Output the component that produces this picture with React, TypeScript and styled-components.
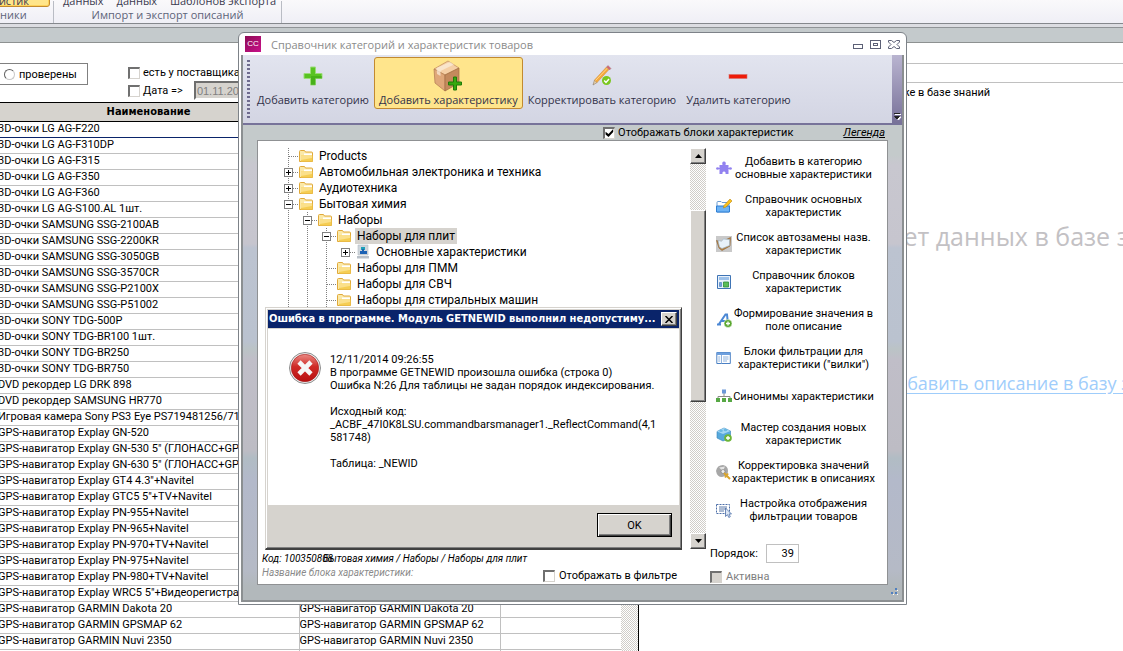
import React from 'react';
import styled, { createGlobalStyle, css } from 'styled-components';

const UI = `Roboto, "Liberation Sans", sans-serif`;
const SEGOE = `"Open Sans", "Noto Sans", sans-serif`;
const BOLD = `"DejaVu Sans Condensed", "DejaVu Sans", sans-serif`;
const FACE = '#d6d3ce';

const Global = createGlobalStyle`
  * { box-sizing: border-box; }
  body { margin: 0; background: #fff; font: 11px/13px ${UI}; color: #000; }
  button, input { font: inherit; color: inherit; margin: 0; }
  svg { display: block; flex: none; }
`;

const Desktop = styled.div`
  position: relative;
  height: 100vh;
  overflow: hidden;
  display: flex;
  flex-direction: column;
`;

/* ---------- ribbon ---------- */
const Ribbon = styled.header`
  flex: none;
  height: 24px;
  display: flex;
  align-items: flex-end;
  background: linear-gradient(#faf9fb, #efeff6);
  border-bottom: 1px solid #85888d;
  font-family: ${SEGOE};
`;
const RibbonGroup = styled.section<{ $w: number }>`
  flex: none;
  width: ${(p) => p.$w}px;
  height: 22px;
  display: flex;
  flex-direction: column;
  justify-content: flex-end;
  align-items: center;
  border-right: 1px solid #b9bcc4;
  white-space: nowrap;
`;
const RibbonCommands = styled.div`
  flex: none;
  display: flex;
  gap: 11px;
  align-self: flex-start;
  padding-left: 8px;
`;
const RibbonButton = styled.button<{ $active?: boolean }>`
  flex: none;
  height: 24px;
  padding: 0 0 1px;
  border: 1px solid transparent;
  background: none;
  display: flex;
  align-items: flex-end;
  line-height: 8px;
  color: #3b3b4f;
  ${(p) =>
    p.$active &&
    css`
      width: 80px;
      margin-left: -38px;
      justify-content: flex-end;
      padding-right: 20px;
      border-color: #c28a30;
      border-radius: 3px;
      background: #ffe58a;
      box-shadow: inset 0 0 0 1px #ffd35a;
    `}
`;
const RibbonCaption = styled.div<{ $start?: boolean }>`
  line-height: 16px;
  color: #5d6379;
  ${(p) => p.$start && css`align-self: flex-start;`}
`;
const Band = styled.div`
  flex: none;
  height: 19px;
  border-top: 3px solid #dcdde2;
  border-bottom: 1px solid #8d9191;
  background: linear-gradient(#8f9396 1px, #c4cacc 1px);
`;

/* ---------- background workspace ---------- */
const Workspace = styled.main`
  flex: 1;
  display: flex;
  min-height: 0;
`;
const ListPane = styled.section`
  flex: none;
  width: 639px;
  display: flex;
  flex-direction: column;
  border-right: 1px solid #000;
`;
const Filters = styled.div`
  flex: none;
  height: 59px;
  display: flex;
  padding-top: 20px;
`;
const RadioBox = styled.div`
  width: 88px;
  height: 22px;
  border: 1px solid #808080;
  border-left: 0;
  display: flex;
  align-items: center;
  padding-left: 4px;
`;
const CheckLabel = styled.label<{ $off?: boolean; $gap?: number }>`
  display: flex;
  align-items: center;
  gap: ${(p) => p.$gap ?? 3}px;
  white-space: nowrap;
  color: ${(p) => (p.$off ? '#808080' : '#000')};
`;
const Radio = styled.input`
  appearance: none;
  width: 11px;
  height: 11px;
  border-radius: 50%;
  border: 1px solid #606060;
  border-right-color: #c8c8c8;
  border-bottom-color: #c8c8c8;
  background: #fff;
`;
const Tick = styled.input`
  appearance: none;
  flex: none;
  width: 12px;
  height: 12px;
  border: 1px solid #707070;
  border-top-width: 2px;
  border-left-width: 2px;
  border-right-color: ${FACE};
  border-bottom-color: ${FACE};
  background: #fff;
  &:disabled { background: ${FACE}; }
  &:checked::after {
    content: '';
    display: block;
    width: 9px;
    height: 9px;
    background: #000;
    clip-path: polygon(5% 35%, 38% 62%, 90% 5%, 90% 38%, 38% 95%, 5% 66%);
  }
`;
const FilterColumn = styled.div`
  display: flex;
  flex-direction: column;
  padding: 3px 0 0 40px;
`;
const DateRow = styled.div`
  display: flex;
  align-items: center;
  gap: 11px;
  margin-top: 2px;
`;
const DateField = styled.input`
  width: 90px;
  height: 19px;
  padding: 0 1px;
  border: 2px solid #6e6e6e;
  border-right-color: #fff;
  border-bottom-color: #fff;
  background: ${FACE};
  color: #808080;
  font-family: "Liberation Sans", sans-serif;
`;
const TableWrap = styled.div`
  flex: 1;
  min-height: 0;
  display: flex;
  border-top: 1px solid #000;
  overflow: hidden;
`;
const Table = styled.table`
  flex: 1;
  align-self: flex-start;
  margin-left: -2px;
  border-collapse: collapse;
  table-layout: fixed;
  white-space: nowrap;
`;
const Th = styled.th`
  height: 18px;
  padding: 0;
  background: ${FACE};
  border-bottom: 1px solid #000;
  font: bold 11px/16px ${BOLD};
`;
const Td = styled.td<{ $current?: boolean; $last?: boolean }>`
  height: 16px;
  padding: 0;
  line-height: 13px;
  vertical-align: top;
  overflow: hidden;
  border-bottom: 1px solid ${(p) => (p.$current ? '#0a246a' : '#c0c0c0')};
  border-right: ${(p) => (p.$last ? '0' : '1px solid #c0c0c0')};
`;
const dither = css`
  background: repeating-conic-gradient(#fff 0 25%, #d0cdc8 0 50%) 0 0 / 2px 2px;
`;
const ListScroll = styled.div`
  width: 17px;
  ${dither}
`;

const DetailPane = styled.section`
  flex: 1;
  min-width: 0;
  overflow: hidden;
  white-space: nowrap;
`;
const DetailLine = styled.div<{ $h: number }>`
  height: ${(p) => p.$h}px;
  border-bottom: 1px solid #c0c0c0;
`;
const DetailNote = styled.p`
  margin: 3px 0 0;
  padding-left: 245px;
`;
const NoData = styled.h2`
  margin: 121px 0 0;
  padding-left: 246px;
  font: 25px/32px ${SEGOE};
  color: #c3c1c4;
`;
const AddLink = styled.a`
  display: inline-block;
  margin: 119px 0 0 245px;
  font: 18px/24px ${SEGOE};
  color: #9fcdfb;
  text-underline-offset: 3px;
`;

/* ---------- catalogue window ---------- */
const Window = styled.section`
  position: absolute;
  left: 238px;
  top: 32px;
  width: 669px;
  height: 573px;
  display: flex;
  flex-direction: column;
  padding: 0 2px 2px;
  border: 1px solid #7d8288;
  border-radius: 6px 6px 0 0;
  background: #fff;
`;
const TitleBar = styled.header`
  flex: none;
  height: 22px;
  display: flex;
  align-items: center;
  padding: 0 4px;
  gap: 10px;
  font-family: ${SEGOE};
  color: #8b8b8b;
`;
const Logo = styled.span`
  width: 16px;
  height: 16px;
  background: linear-gradient(135deg, #8d0c55, #c9128a);
  color: #fff;
  font: 8px/15px "Liberation Sans", sans-serif;
  text-align: center;
`;
const WindowTitle = styled.h1`
  flex: 1;
  margin: 0;
  font: inherit;
`;
const WindowButton = styled.button`
  padding: 0;
  width: 12px;
  height: 12px;
  border: 0;
  background: none;
  margin-left: -4px;
`;
const WindowBody = styled.div`
  flex: 1;
  min-height: 0;
  display: flex;
  flex-direction: column;
  border: 2px solid #8b8f91;
  border-top: 0;
  background: linear-gradient(
    #c4cacb 0 100px, #c8c7cf 110px, #c6c5ce 189px, #bcc3d0 193px, #bac2cf 286px,
    #bbc3c6 294px, #c0bec8 304px, #bdbcc4 395px, #b1bcc4 403px, #b3b9ca 425px, #b5bac6 515px, #b2b8bb 532px
  );
`;
const Toolbar = styled.nav`
  flex: none;
  height: 70px;
  display: flex;
  border-bottom: 2px solid #77739a;
  background: linear-gradient(#e2e4ef, #d3d5e3);
  font-family: ${SEGOE};
`;
const Grip = styled.span`
  width: 3px;
  height: 59px;
  margin: 5px 2px 0 4px;
  background: repeating-linear-gradient(#6f6c8f 0 2px, transparent 2px 4px);
`;
const ToolButton = styled.button<{ $active?: boolean }>`
  height: 52px;
  margin-top: 2px;
  padding: 0 4px;
  display: flex;
  flex-direction: column;
  align-items: center;
  border: 1px solid ${(p) => (p.$active ? '#c28a30' : 'transparent')};
  border-radius: 3px;
  background: ${(p) => (p.$active ? '#ffe58c' : 'none')};
  line-height: 14px;
  color: #33334a;
  white-space: nowrap;
`;
const ToolIcon = styled.span`
  height: 35px;
  display: flex;
  align-items: center;
`;
const ToolOverflow = styled.button`
  width: 10px;
  padding: 0;
  margin-left: auto;
  border: 0;
  background: linear-gradient(#b9b4d0, #787299);
  display: flex;
  align-items: flex-end;
  justify-content: center;
`;
const Options = styled.div`
  flex: none;
  height: 15px;
  display: flex;
  align-items: center;
  justify-content: flex-end;
  gap: 50px;
  padding-right: 17px;
`;
const Legend = styled.a`
  color: #000;
  font-style: italic;
`;
const Panel = styled.div`
  flex: 1;
  min-height: 0;
  margin: 0 14px 15px;
  display: flex;
  border: 1px solid #8f9193;
  background: #fff;
`;
const TreeSide = styled.div`
  flex: 1;
  display: flex;
  flex-direction: column;
  padding-top: 7px;
`;
const Tree = styled.ul`
  flex: 1;
  margin: 0;
  padding: 0 0 0 21px;
  list-style: none;
  font-size: 12px;
`;
const Node = styled.li`
  height: 16px;
  display: flex;
  align-items: center;
  white-space: nowrap;
`;
const vdots = 'repeating-linear-gradient(#808080 0 1px, transparent 1px 2px) 9px 0 / 1px 100% no-repeat';
const hdots = 'repeating-linear-gradient(90deg, #808080 0 1px, transparent 1px 2px) 10px 8px / 9px 1px no-repeat';
const Guide = styled.span<{ $v?: boolean; $h?: boolean }>`
  flex: none;
  width: 19px;
  height: 16px;
  padding: 4px 0 0 5px;
  background: ${(p) => [p.$v && vdots, p.$h && hdots].filter(Boolean).join(', ') || 'none'};
`;
const Expander = styled.button<{ $open?: boolean }>`
  display: block;
  width: 9px;
  height: 9px;
  padding: 0;
  border: 1px solid #808080;
  background:
    linear-gradient(#000, #000) 1px 3px / 5px 1px no-repeat,
    ${(p) => (p.$open ? '' : 'linear-gradient(#000, #000) 3px 1px / 1px 5px no-repeat,')}
    #fff;
`;
const NodeLabel = styled.span<{ $selected?: boolean }>`
  height: 16px;
  line-height: 17px;
  margin-left: 3px;
  padding: 0 2px;
  background: ${(p) => (p.$selected ? FACE : 'none')};
`;
const Footnotes = styled.footer`
  flex: none;
  height: 36px;
  display: flex;
  justify-content: space-between;
  padding: 4px 13px 0 4px;
  white-space: nowrap;
  font-size: 10px;
  font-style: italic;
`;
const CodeLine = styled.div`
  display: flex;
  line-height: 14px;
`;
const Code = styled.span`
  width: 61px;
`;
const BlockName = styled.div`
  line-height: 14px;
  color: #8a8a8a;
`;
const FilterCheck = styled.div`
  padding-top: 17px;
  font-size: 11px;
  font-style: normal;
`;

const raised = css`
  border: 1px solid #fff;
  border-right-color: #404040;
  border-bottom-color: #404040;
  background: ${FACE};
  box-shadow: inset -1px -1px 0 #808080;
`;
const Scrollbar = styled.div`
  flex: none;
  width: 16px;
  height: 401px;
  margin-top: 7px;
  display: flex;
  flex-direction: column;
  ${dither}
`;
const ScrollButton = styled.button`
  flex: none;
  height: 16px;
  padding: 0;
  display: flex;
  align-items: center;
  justify-content: center;
  ${raised}
`;
const Thumb = styled.div`
  height: 192px;
  margin: 46px 0 auto;
  ${raised}
`;

const Side = styled.aside`
  flex: none;
  width: 181px;
  padding: 8px 12px 0 4px;
`;
const SideButton = styled.button`
  width: 100%;
  height: 38px;
  padding: 0 0 0 6px;
  display: flex;
  align-items: center;
  border: 0;
  background: none;
  line-height: 13px;
`;
const SideText = styled.span`
  flex: 1;
  text-align: center;
  white-space: pre;
`;
const OrderRow = styled.label`
  display: flex;
  align-items: center;
  height: 20px;
  margin-top: 14px;
`;
const OrderField = styled.input`
  width: 33px;
  height: 19px;
  margin-left: 8px;
  padding: 0 4px;
  border: 1px solid #c0c0c0;
  text-align: right;
`;
const ActiveRow = styled.div`
  padding-top: 7px;
`;
const Resize = styled.span`
  position: absolute;
  right: 7px;
  bottom: 8px;
`;

/* ---------- error dialog ---------- */
const Dialog = styled.section`
  position: absolute;
  left: 265px;
  top: 307px;
  width: 417px;
  height: 243px;
  display: flex;
  flex-direction: column;
  padding: 1px;
  border: 1px solid ${FACE};
  border-right-color: #404040;
  border-bottom: 2px solid #404040;
  background: ${FACE};
  box-shadow: inset 1px 1px 0 #fff, inset -1px -1px 0 #808080;
`;
const DialogTitle = styled.header`
  flex: none;
  height: 18px;
  margin: 1px;
  display: flex;
  align-items: center;
  padding: 0 2px 0 1px;
  background: #0a246a;
  color: #fff;
  font: bold 11px/16px ${BOLD};
  white-space: nowrap;
`;
const DialogHeading = styled.h2`
  flex: 1;
  margin: 0;
  font: inherit;
`;
const CloseButton = styled.button`
  width: 16px;
  height: 14px;
  padding: 0;
  display: flex;
  align-items: center;
  justify-content: center;
  ${raised}
`;
const DialogBody = styled.div`
  flex: 1;
  display: flex;
  gap: 8px;
  margin: 0 1px;
  padding: 22px 20px 0;
  background: #fff;
`;
const Message = styled.p`
  margin: 2px 0 0;
  white-space: pre-line;
`;
const DialogFooter = styled.footer`
  flex: none;
  height: 42px;
  display: flex;
  justify-content: flex-end;
  padding: 8px 8px 0;
`;
const OkButton = styled.button`
  width: 75px;
  height: 24px;
  padding: 0;
  border: 1px solid #000;
  background: ${FACE};
  box-shadow: inset 1px 1px 0 #fff, inset -1px -1px 0 #404040, inset -2px -2px 0 #808080;
`;

/* ---------- drawings ---------- */
const PlusIcon = () => (
  <svg width="20" height="20" viewBox="0 0 20 20">
    <path d="M7.5 1h5v6.5H19v5h-6.500V19h-5v-6.500H1v-5h6.500z" fill="#58c322" stroke="#9bdc78" />
    <path d="M8 10h11v2.500h-6.500V19H8z" fill="#35a00f" opacity=".5" />
  </svg>
);
const BoxIcon = () => (
  <svg width="30" height="32" viewBox="0 0 30 32">
    <path d="M1 9 15 1l11 7-14 7z" fill="#f5cfa5" stroke="#c08a5c" strokeWidth=".7" />
    <path d="M1 9l11 6v16L2 23z" fill="#dfa779" stroke="#b07a50" strokeWidth=".7" />
    <path d="M12 15 26 8v15L12 31z" fill="#c48a5d" stroke="#a06d45" strokeWidth=".7" />
    <path d="M3.500 8 17 2l4 2.500L7.500 11v5L4 14z" fill="#fbeedd" opacity=".7" />
    <path d="M20.500 17h3v5h5v3h-5v5h-3v-5h-5v-3h5z" fill="#37a80f" stroke="#1f7a08" />
  </svg>
);
const PencilIcon = () => (
  <svg width="20" height="21" viewBox="0 0 20 21">
    <path d="M1 20l1.500-5 2.500 2.500z" fill="#e8cfa8" stroke="#8a7a66" strokeWidth=".6" />
    <path d="M2.500 15 14.500 2l2.500 2.500L5 17.500z" fill="#f6a93a" stroke="#c98a3a" strokeWidth=".5" />
    <path d="M3.500 15.500 15.500 3" stroke="#ffd489" />
    <path d="m14.500 2 1.500-1.500L19 3.500 17.500 5z" fill="#d8606c" stroke="#9b8a96" strokeWidth=".5" />
    <circle cx="14.500" cy="15.500" r="4.500" fill="#7ac71f" />
    <path d="m12.200 15.500 1.800 1.900 3-3.400" fill="none" stroke="#fff" strokeWidth="1.500" />
  </svg>
);
const MinusIcon = () => (
  <svg width="20" height="20" viewBox="0 0 20 20">
    <rect x="1" y="8.500" width="18" height="4" fill="#ee1c0a" stroke="#d8706a" strokeWidth=".6" />
  </svg>
);
const FolderIcon = () => (
  <svg width="16" height="16" viewBox="0 0 16 16">
    <path d="M1.500 13.500v-10q0-1 1-1h4l1 1.500h6q1 0 1 1v8.500z" fill="#fbe9a8" stroke="#e0a93a" />
    <path d="M6 5.500h8v2H6z" fill="#fff" />
    <path d="M3 7.500h11.500v6H3z" fill="#f5cd52" />
    <path d="M3 7.500h11v2.500L3 12z" fill="#fbe08a" />
  </svg>
);
const PropsIcon = () => (
  <svg width="16" height="16" viewBox="0 0 16 16">
    <path d="M3 1h10v10H3z" fill="#cfd6dc" stroke="#b5bcc4" strokeWidth=".6" />
    <path d="M2 12h12v2.500H2z" fill="#b9c0c8" />
    <path d="M6 3h4v3H6z" fill="#1d9fb8" />
    <path d="M7 5h2v2h3v3H5V7h2z" fill="#1c62b4" />
  </svg>
);
const Arrow = ({ up }: { up?: boolean }) => (
  <svg width="7" height="4" viewBox="0 0 7 4">
    <path d={up ? 'M3.500 0 7 4H0z' : 'M0 0h7L3.500 4z'} />
  </svg>
);
const icons: Record<string, React.ReactNode> = {
  puzzle: (
    <path d="M3.500 5h3q-1-3.500 1.500-3.500T9.500 5h3v3q.5 0 1.500-.8 2 0 2 1.300t-2 1.300q-1-.8-1.500-.8V14H9.500q.5-2.500-1.500-2.500T6.500 14h-3V9q-.5 0-1.500.8-2 0-2-1.300t2-1.300q1 .8 1.500.8z" fill="#9282f0" />
  ),
  edit: (
    <>
      <path d="M1 14V4.500q0-1 1-1h3l1 1h6q1 0 1 1V14z" fill="#fff" stroke="#6a9cd2" />
      <path d="M.5 8h13v6H.5z" fill="#6db3f5" stroke="#2f7fd4" />
      <path d="M7.500 10 8 7.500l6-6.500 2 2-6 6z" fill="#fbc21c" stroke="#b98512" strokeWidth=".6" />
    </>
  ),
  book: (
    <>
      <path d="M0 0h16v16H0z" fill="#c9c9c9" />
      <path d="M.5 4.500 5 6l9.500-4.500L14 10l-8 4.500L3 12z" fill="#b88748" stroke="#8c5d28" strokeWidth=".6" />
      <path d="m2 4.500 3.500.7L7.500 3l6 .5v6L6 12.500 3.500 11z" fill="#e7f1f9" stroke="#9ab4c8" strokeWidth=".6" />
    </>
  ),
  blocks: (
    <>
      <path d="M1.500 1.500h13v13h-13z" fill="#e8f1fb" stroke="#3f74b5" />
      <path d="M3 3h10v3H3z" fill="#9cc1ea" />
      <path d="M3.500 8.500h2v4h-2z" fill="#6fa2dc" stroke="#3f74b5" strokeWidth=".6" />
      <path d="M7.500 8h5v5h-5z" fill="#5cbd56" stroke="#2c8a3a" strokeWidth=".8" />
    </>
  ),
  letter: (
    <>
      <path d="M3 12 9.500 2.500h1.500L12 12M5 9h7M1 12.500h4M9 12.500h4" fill="none" stroke="#4b87d4" strokeWidth="2" />
      <circle cx="12" cy="11.500" r="4" fill="#5aa72f" stroke="#fff" strokeWidth=".5" />
      <path d="M12 9.500v4M10 11.500h4" stroke="#fff" strokeWidth="1.300" />
    </>
  ),
  panes: (
    <>
      <path d="M.8 2.500h13.500v11H.8z" fill="#fff" stroke="#4a80c4" />
      <path d="M.8 2.500h13.500V5H.8z" fill="#6ea0de" />
      <path d="M5.500 5v8.500" stroke="#8fb2dd" />
      <path d="M2.200 7h2M2.200 9h2M2.200 11h2M7 7h5.500M7 9h5.500M7 11h4" stroke="#8fb2dd" />
    </>
  ),
  org: (
    <>
      <path d="M8 5v4M2 11V8.500h12V11" fill="none" stroke="#8a8a8a" />
      <path d="M6 1.500h4v4H6z" fill="#6b98d8" />
      <path d="M0 10h4v4H0zM6 10h4v4H6zM12 10h4v4h-4z" fill="#57a845" />
    </>
  ),
  brick: (
    <>
      <path d="M1 5.500 8 2l6.500 3v7L7 15 1 12z" fill="#57a9dc" stroke="#3583b8" strokeWidth=".6" />
      <path d="m1 5.500 6 2.500 7.500-3L8 2z" fill="#a3d6f3" />
      <ellipse cx="5" cy="4.800" rx="1.800" ry="1.200" fill="#6ab8e4" />
      <ellipse cx="9.500" cy="4" rx="1.800" ry="1.200" fill="#6ab8e4" />
      <circle cx="12" cy="12" r="3.800" fill="#6cb536" />
      <path d="M12 10v4M10 12h4" stroke="#fff" strokeWidth="1.300" />
    </>
  ),
  disc: (
    <>
      <path d="M0 7q1-6 7-6 5 1 5 6 0 5-6 6-5 0-6-6z" fill="#a7a7a7" />
      <path d="M3 3.500 9 2.500 7 7z" fill="#e4e4e4" />
      <circle cx="7" cy="7.500" r="2" fill="#eee" stroke="#777" strokeWidth=".6" />
      <path d="m8 9 6 6M12 9.500l-3 4" stroke="#d9a52e" strokeWidth="2" />
    </>
  ),
  select: (
    <>
      <path d="M.5 2.500h13v9H.5z" fill="none" stroke="#4c6ea8" strokeDasharray="2 1" />
      <path d="M3 5h8M3 7h8M3 9h5" stroke="#5a78a8" />
      <path d="M9.500 6v8.500l2-1.800 1.300 2.800 1.500-.8-1.300-2.700h2.500z" fill="#dce6f4" stroke="#4c6ea8" strokeWidth=".8" />
    </>
  ),
};
const ErrorIcon = () => (
  <svg width="34" height="34" viewBox="0 0 34 34">
    <defs>
      <linearGradient id="err" x1="0" y1="0" x2="0" y2="1">
        <stop offset="0" stopColor="#ea8a84" />
        <stop offset=".45" stopColor="#cf2a26" />
        <stop offset="1" stopColor="#b80f10" />
      </linearGradient>
    </defs>
    <circle cx="17" cy="17" r="15.500" fill="#f1f1f1" stroke="#8c8c8c" />
    <circle cx="17" cy="17" r="13.700" fill="url(#err)" stroke="#a31a1a" strokeWidth=".6" />
    <path d="m11 11 12 12M23 11 11 23" stroke="#f6f6f6" strokeWidth="4.600" />
  </svg>
);

/* ---------- data ---------- */
const goods: { name: string; extra?: string }[] = [
  ...[
    '3D-очки LG AG-F220', '3D-очки LG AG-F310DP', '3D-очки LG AG-F315', '3D-очки LG AG-F350', '3D-очки LG AG-F360',
    '3D-очки LG AG-S100.AL 1шт.', '3D-очки SAMSUNG SSG-2100AB', '3D-очки SAMSUNG SSG-2200KR',
    '3D-очки SAMSUNG SSG-3050GB', '3D-очки SAMSUNG SSG-3570CR', '3D-очки SAMSUNG SSG-P2100X',
    '3D-очки SAMSUNG SSG-P51002', '3D-очки SONY TDG-500P', '3D-очки SONY TDG-BR100 1шт.', '3D-очки SONY TDG-BR250',
    '3D-очки SONY TDG-BR750', 'DVD рекордер LG DRK 898', 'DVD рекордер SAMSUNG HR770',
    'Игровая камера Sony PS3 Eye PS719481256/719', 'GPS-навигатор Explay GN-520',
    'GPS-навигатор Explay GN-530 5" (ГЛОНАСС+GPS)', 'GPS-навигатор Explay GN-630 5" (ГЛОНАСС+GPS)',
    'GPS-навигатор Explay GT4 4.3"+Navitel', 'GPS-навигатор Explay GTC5 5"+TV+Navitel',
    'GPS-навигатор Explay PN-955+Navitel', 'GPS-навигатор Explay PN-965+Navitel',
    'GPS-навигатор Explay PN-970+TV+Navitel', 'GPS-навигатор Explay PN-975+Navitel',
    'GPS-навигатор Explay PN-980+TV+Navitel', 'GPS-навигатор Explay WRC5 5"+Видеорегистратор',
  ].map((name) => ({ name })),
  ...['GPS-навигатор GARMIN Dakota 20', 'GPS-навигатор GARMIN GPSMAP 62', 'GPS-навигатор GARMIN Nuvi 2350'].map(
    (name) => ({ name, extra: name }),
  ),
  { name: '' },
];

type TreeNode = { label: string; depth: number; box?: 'open' | 'closed'; selected?: boolean; props?: boolean };
const nodes: TreeNode[] = [
  { label: 'Products', depth: 0 },
  { label: 'Автомобильная электроника и техника', depth: 0, box: 'closed' },
  { label: 'Аудиотехника', depth: 0, box: 'closed' },
  { label: 'Бытовая химия', depth: 0, box: 'open' },
  { label: 'Наборы', depth: 1, box: 'open' },
  { label: 'Наборы для плит', depth: 2, box: 'open', selected: true },
  { label: 'Основные характеристики', depth: 3, box: 'closed', props: true },
  { label: 'Наборы для ПММ', depth: 2 },
  { label: 'Наборы для СВЧ', depth: 2 },
  { label: 'Наборы для стиральных машин', depth: 2 },
];

const actions: [string, string][] = [
  ['puzzle', 'Добавить в категорию\nосновные характеристики'],
  ['edit', 'Справочник основных\nхарактеристик'],
  ['book', 'Список автозамены назв.\nхарактеристик'],
  ['blocks', 'Справочник блоков\nхарактеристик'],
  ['letter', 'Формирование значения в\nполе описание'],
  ['panes', 'Блоки фильтрации для\nхарактеристики ("вилки")'],
  ['org', 'Синонимы характеристики'],
  ['brick', 'Мастер создания новых\nхарактеристик'],
  ['disc', 'Корректировка значений\nхарактеристик в описаниях'],
  ['select', 'Настройка отображения\nфильтрации товаров'],
];

const tools: { label: string; icon: React.ReactNode; active?: boolean }[] = [
  { label: 'Добавить категорию', icon: <PlusIcon /> },
  { label: 'Добавить характеристику', icon: <BoxIcon />, active: true },
  { label: 'Корректировать категорию', icon: <PencilIcon /> },
  { label: 'Удалить категорию', icon: <MinusIcon /> },
];

const message = `12/11/2014 09:26:55
В программе GETNEWID произошла ошибка (строка 0)
Ошибка N:26 Для таблицы не задан порядок индексирования.

Исходный код:
_ACBF_47I0K8LSU.commandbarsmanager1._ReflectCommand(4,1
581748)

Таблица: _NEWID`;

function Background() {
  return (
    <>
      <Ribbon>
        <RibbonGroup $w={54}>
          <RibbonCommands>
            <RibbonButton $active>истик</RibbonButton>
          </RibbonCommands>
          <RibbonCaption $start>ники</RibbonCaption>
        </RibbonGroup>
        <RibbonGroup $w={228}>
          <RibbonCommands>
            <RibbonButton>данных</RibbonButton>
            <RibbonButton>данных</RibbonButton>
            <RibbonButton>шаблонов экспорта</RibbonButton>
          </RibbonCommands>
          <RibbonCaption>Импорт и экспорт описаний</RibbonCaption>
        </RibbonGroup>
      </Ribbon>
      <Band />
      <Workspace>
        <ListPane>
          <Filters>
            <RadioBox>
              <CheckLabel $gap={4}>
                <Radio type="radio" name="state" />
                проверены
              </CheckLabel>
            </RadioBox>
            <FilterColumn>
              <CheckLabel>
                <Tick type="checkbox" />
                есть у поставщика
              </CheckLabel>
              <DateRow>
                <CheckLabel>
                  <Tick type="checkbox" />
                  Дата =&gt;
                </CheckLabel>
                <DateField aria-label="Дата" defaultValue="01.11.2014" disabled />
              </DateRow>
            </FilterColumn>
          </Filters>
          <TableWrap>
            <Table>
              <colgroup>
                <col width="301" />
                <col width="201" />
                <col />
              </colgroup>
              <thead>
                <tr>
                  <Th>Наименование</Th>
                  <Th />
                  <Th />
                </tr>
              </thead>
              <tbody>
                {goods.map((g, i) => (
                  <tr key={i}>
                    <Td $current={i === 0}>{g.name}</Td>
                    <Td $current={i === 0}>{g.extra}</Td>
                    <Td $current={i === 0} $last />
                  </tr>
                ))}
              </tbody>
            </Table>
            <ListScroll />
          </TableWrap>
        </ListPane>
        <DetailPane>
          <DetailLine $h={21} />
          <DetailLine $h={19} />
          <DetailNote>также в базе знаний</DetailNote>
          <NoData>Нет данных в базе знаний</NoData>
          <AddLink href="#">Добавить описание в базу знаний</AddLink>
        </DetailPane>
      </Workspace>
    </>
  );
}

export default function App() {
  return (
    <Desktop>
      <Global />
      <Background />
      <Window>
        <TitleBar>
          <Logo>CC</Logo>
          <WindowTitle>Справочник категорий и характеристик товаров</WindowTitle>
          <WindowButton aria-label="Свернуть">
            <svg width="12" height="12" fill="none" stroke="#5c6076">
              <rect x="1.500" y="6.500" width="9" height="4" />
            </svg>
          </WindowButton>
          <WindowButton aria-label="Развернуть">
            <svg width="12" height="12" fill="none" stroke="#5c6076">
              <rect x=".5" y="2.500" width="10" height="8" />
              <rect x="3.500" y="5.500" width="4" height="2" />
            </svg>
          </WindowButton>
          <WindowButton aria-label="Закрыть">
            <svg width="12" height="12" fill="#fff" stroke="#5c6076">
              <path d="M.5 2.500h3L6 4.500l2.500-2h3V4L9 6.500 11.500 9v1.500h-3L6 8.500l-2.500 2h-3V9L3 6.500.5 4z" />
            </svg>
          </WindowButton>
        </TitleBar>
        <WindowBody>
          <Toolbar>
            <Grip />
            {tools.map((t) => (
              <ToolButton key={t.label} $active={t.active}>
                <ToolIcon>{t.icon}</ToolIcon>
                {t.label}
              </ToolButton>
            ))}
            <ToolOverflow aria-label="Ещё">
              <svg width="10" height="12">
                <path d="M3 3.500h6M4 6h5L6.500 9z" fill="#fff" stroke="#fff" />
                <path d="M2 2.500h6M2.500 5.500h5L5 8z" fill="#222" stroke="#222" />
              </svg>
            </ToolOverflow>
          </Toolbar>
          <Options>
            <CheckLabel>
              <Tick type="checkbox" defaultChecked />
              Отображать блоки характеристик
            </CheckLabel>
            <Legend href="#">Легенда</Legend>
          </Options>
          <Panel>
            <TreeSide>
              <Tree>
                {nodes.map((n) => (
                  <Node key={n.label}>
                    {Array.from({ length: n.depth }, (_, i) => (
                      <Guide key={i} $v />
                    ))}
                    <Guide $v={n.depth !== 3} $h>
                      {n.box && <Expander $open={n.box === 'open'} aria-label={n.label} />}
                    </Guide>
                    {n.props ? <PropsIcon /> : <FolderIcon />}
                    <NodeLabel $selected={n.selected}>{n.label}</NodeLabel>
                  </Node>
                ))}
              </Tree>
              <Footnotes>
                <div>
                  <CodeLine>
                    <Code>Код: 100350808</Code>
                    <span>Бытовая химия / Наборы / Наборы для плит</span>
                  </CodeLine>
                  <BlockName>Название блока характеристики:</BlockName>
                </div>
                <FilterCheck>
                  <CheckLabel $gap={4}>
                    <Tick type="checkbox" />
                    Отображать в фильтре
                  </CheckLabel>
                </FilterCheck>
              </Footnotes>
            </TreeSide>
            <Scrollbar>
              <ScrollButton aria-label="Вверх">
                <Arrow up />
              </ScrollButton>
              <Thumb />
              <ScrollButton aria-label="Вниз">
                <Arrow />
              </ScrollButton>
            </Scrollbar>
            <Side>
              {actions.map(([icon, text]) => (
                <SideButton key={text}>
                  <svg width="16" height="16" viewBox="0 0 16 16">
                    {icons[icon]}
                  </svg>
                  <SideText>{text}</SideText>
                </SideButton>
              ))}
              <OrderRow>
                Порядок:
                <OrderField defaultValue="39" />
              </OrderRow>
              <ActiveRow>
                <CheckLabel $off $gap={4}>
                  <Tick type="checkbox" disabled />
                  Активна
                </CheckLabel>
              </ActiveRow>
            </Side>
          </Panel>
        </WindowBody>
        <Resize>
          <svg width="8" height="8" fill="#4f7fc0">
            <path d="M4 0h2v2H4zM4 4h2v2H4zM0 4h2v2H0z" />
            <path d="M6 2h1v1H6zM6 6h1v1H6zM2 6h1v1H2z" fill="#fff" />
          </svg>
        </Resize>
      </Window>
      <Dialog role="alertdialog" aria-label="Ошибка">
        <DialogTitle>
          <DialogHeading>Ошибка в программе. Модуль GETNEWID выполнил недопустиму...</DialogHeading>
          <CloseButton aria-label="Закрыть">
            <svg width="8" height="7" stroke="#000" strokeWidth="1.500">
              <path d="m.5 0 7 7M7.500 0l-7 7" />
            </svg>
          </CloseButton>
        </DialogTitle>
        <DialogBody>
          <ErrorIcon />
          <Message>{message}</Message>
        </DialogBody>
        <DialogFooter>
          <OkButton>OK</OkButton>
        </DialogFooter>
      </Dialog>
    </Desktop>
  );
}
